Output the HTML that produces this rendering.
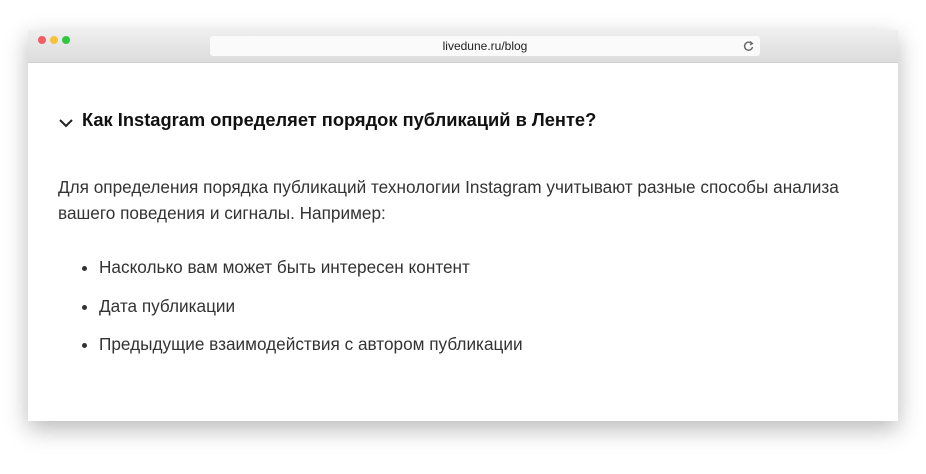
<!DOCTYPE html><html><head><style>
body{margin:0;width:926px;height:474px;background:#fff;position:relative;overflow:hidden;font-family:"Liberation Sans",sans-serif}
.win{position:absolute;left:28px;top:30px;width:870px;height:391px;background:#fff;box-shadow:0 8px 22px rgba(0,0,0,.28)}
.bar{height:32px;background:linear-gradient(#efefef,#dcdcdc);border-bottom:1px solid #d0d0d0}
.d{position:absolute;top:6px;width:8px;height:8px;border-radius:50%}
.url{position:absolute;left:182px;top:6px;width:550px;height:20px;background:#fafafa;border-radius:3px;text-align:center;font-size:12px;line-height:20px;color:#222}
h2{position:absolute;left:54px;top:79px;margin:0;font-size:18.3px;font-weight:bold;color:#111}
p{position:absolute;left:30px;top:144px;margin:0;font-size:17.2px;line-height:26px;color:#333;width:800px}
ul{position:absolute;left:30px;top:224px;margin:0;padding-left:41px;font-size:17.2px;color:#333}
li{height:38.5px;line-height:26px}
</style></head><body>
<div class="win"><div class="bar">
<div class="d" style="left:10px;background:#f25c63"></div><div class="d" style="left:22px;background:#f8c23a"></div><div class="d" style="left:34px;background:#2ec842"></div>
<div class="url">livedune.ru/blog<svg style="position:absolute;right:6px;top:4px" width="11" height="12" viewBox="0 0 11 12"><path d="M8.5 3.5A4 4 0 1 0 9.5 7" fill="none" stroke="#666" stroke-width="1.4"/><path d="M7 1.5l2.5 2-2.5 1.5" fill="none" stroke="#666" stroke-width="1.2"/></svg></div></div>
<svg style="position:absolute;left:30px;top:87px" width="16" height="12" viewBox="0 0 16 12"><path d="M2 3l6 6 6-6" fill="none" stroke="#222" stroke-width="2"/></svg>
<h2>Как Instagram определяет порядок публикаций в Ленте?</h2>
<p>Для определения порядка публикаций технологии Instagram учитывают разные способы анализа вашего поведения и сигналы. Например:</p>
<ul><li>Насколько вам может быть интересен контент</li><li>Дата публикации</li><li>Предыдущие взаимодействия с автором публикации</li></ul>
</div></body></html>
